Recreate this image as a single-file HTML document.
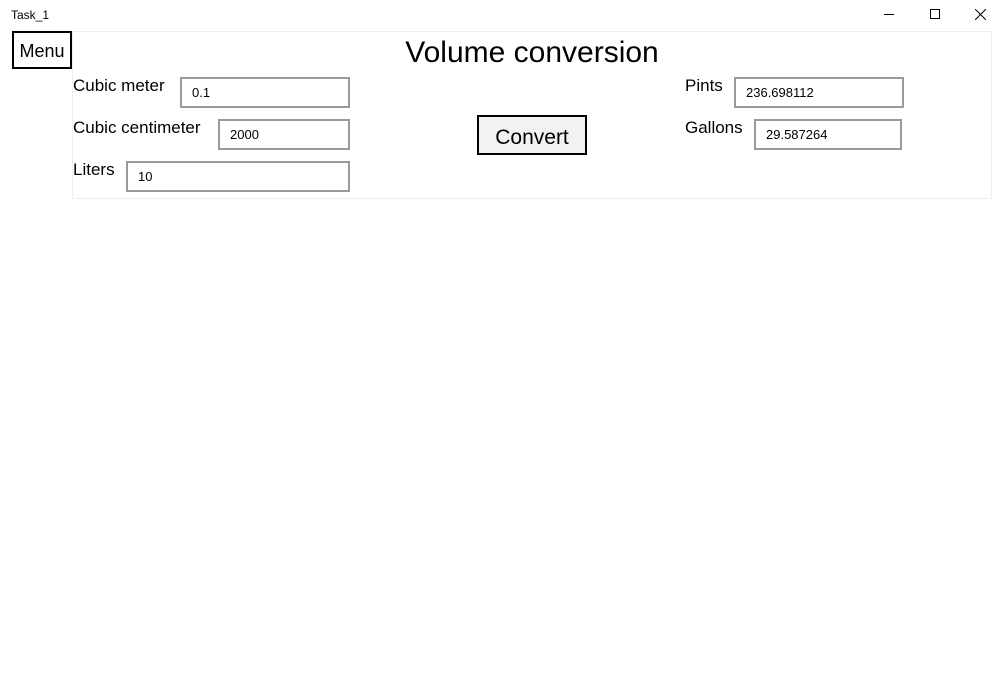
<!DOCTYPE html>
<html><head><meta charset="utf-8"><style>
*{margin:0;padding:0;box-sizing:border-box}
body{width:1003px;height:694px;background:#fff;position:relative;overflow:hidden;font-family:"Liberation Sans",sans-serif;color:#000}
.a{position:absolute}
.tb{position:absolute;border:2px solid #999;background:#fff;font-size:13px;padding-left:10px;line-height:27px}
.lbl{position:absolute;font-size:17px;line-height:20px}
</style></head><body>
<div class="a" style="left:11px;top:8px;font-size:12px">Task_1</div>
<div class="a" style="left:884px;top:14px;width:10px;height:1px;background:#000"></div>
<div class="a" style="left:930px;top:9px;width:10px;height:10px;border:1px solid #000"></div>
<svg class="a" style="left:975px;top:9px" width="11" height="11"><path d="M0 0L11 11M11 0L0 11" stroke="#000" stroke-width="1"/></svg>
<div class="a" style="left:72px;top:31px;width:920px;height:168px;border:1px solid #eee"></div>
<div class="a" style="left:12px;top:31px;width:60px;height:38px;border:2px solid #000;font-size:18px;line-height:36px;text-align:center;background:#fff">Menu</div>
<div class="a" style="left:332px;top:35px;width:400px;text-align:center;font-size:30px;line-height:36px">Volume conversion</div>
<div class="lbl" style="left:73px;top:76px">Cubic meter</div>
<div class="tb" style="left:180px;top:77px;width:170px;height:31px">0.1</div>
<div class="lbl" style="left:73px;top:118px">Cubic centimeter</div>
<div class="tb" style="left:218px;top:119px;width:132px;height:31px">2000</div>
<div class="lbl" style="left:73px;top:160px">Liters</div>
<div class="tb" style="left:126px;top:161px;width:224px;height:31px">10</div>
<div class="a" style="left:477px;top:115px;width:110px;height:40px;border:2px solid #000;background:#f2f2f2;font-size:21px;line-height:41px;text-align:center">Convert</div>
<div class="lbl" style="left:685px;top:76px">Pints</div>
<div class="tb" style="left:734px;top:77px;width:170px;height:31px">236.698112</div>
<div class="lbl" style="left:685px;top:118px">Gallons</div>
<div class="tb" style="left:754px;top:119px;width:148px;height:31px">29.587264</div>
</body></html>
